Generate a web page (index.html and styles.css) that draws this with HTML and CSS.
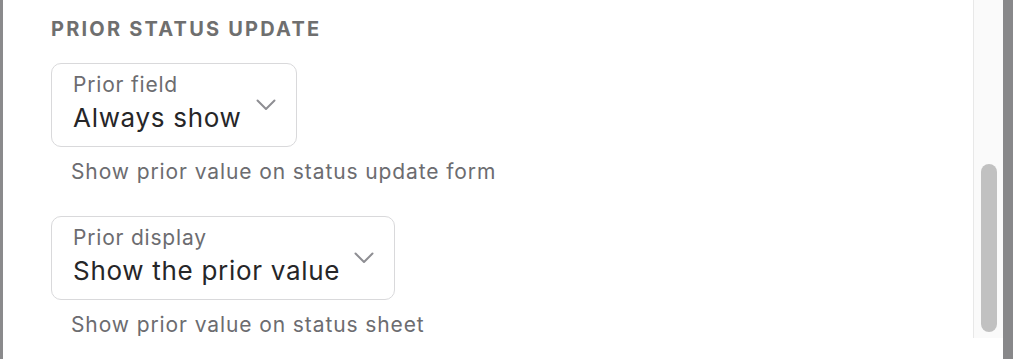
FILE: index.html
```html
<!DOCTYPE html>
<html>
<head>
<meta charset="utf-8">
<link rel="stylesheet" href="styles.css">
</head>
<body>
<div class="frame">
  <div class="edge-left"></div>
  <main class="panel">
    <h2 class="section-title">PRIOR STATUS UPDATE</h2>
    <div class="field">
      <div class="select">
        <div class="select-text">
          <span class="select-label">Prior field</span>
          <span class="select-value">Always show</span>
        </div>
        <svg class="chevron" viewBox="0 0 20 12" width="20" height="12"><path d="M1.5 1.5 L10 10 L18.5 1.5" fill="none" stroke="#8e8e93" stroke-width="2" stroke-linecap="round" stroke-linejoin="round"/></svg>
      </div>
      <p class="help">Show prior value on status update form</p>
    </div>
    <div class="field">
      <div class="select">
        <div class="select-text">
          <span class="select-label">Prior display</span>
          <span class="select-value">Show the prior value</span>
        </div>
        <svg class="chevron" viewBox="0 0 20 12" width="20" height="12"><path d="M1.5 1.5 L10 10 L18.5 1.5" fill="none" stroke="#8e8e93" stroke-width="2" stroke-linecap="round" stroke-linejoin="round"/></svg>
      </div>
      <p class="help">Show prior value on status sheet</p>
    </div>
  </main>
  <div class="scroll-track">
    <div class="scroll-thumb"></div>
  </div>
  <div class="edge-right"></div>
</div>
</body>
</html>
```

FILE: styles.css
```css
html, body {
  margin: 0;
  padding: 0;
  background: #ffffff;
}
body {
  font-family: "Inter", "Liberation Sans", sans-serif;
  width: 1013px;
  height: 359px;
  overflow: hidden;
}
.frame {
  display: flex;
  height: 359px;
}
.edge-left {
  width: 3px;
  background: #8a8a8c;
  flex: none;
}
.panel {
  flex: 1;
  padding: 17px 0 0 48px;
  box-sizing: border-box;
}
.section-title {
  margin: 0;
  font-size: 20px;
  line-height: 24px;
  font-weight: 700;
  color: #6f6f6f;
  letter-spacing: 2.2px;
}
.field {
  margin-top: 22px;
}
.field + .field {
  margin-top: 32px;
}
.select {
  display: inline-flex;
  align-items: center;
  box-sizing: border-box;
  height: 84px;
  border: 1.5px solid #d9d9db;
  border-radius: 10px;
  padding: 0 20px 0 21px;
}
.select-text {
  display: flex;
  flex-direction: column;
  margin-top: -4px;
}
.select-label {
  font-size: 21px;
  line-height: 28px;
  color: #6c6c70;
  letter-spacing: 0.8px;
}
.select-value {
  margin-top: 2px;
  font-size: 26px;
  line-height: 34px;
  color: #262628;
  letter-spacing: 0.7px;
}
.chevron {
  margin-left: 14px;
  margin-top: 0;
  flex: none;
}
.help {
  margin: 13px 0 0 20px;
  font-size: 21px;
  line-height: 24px;
  color: #6c6c70;
  letter-spacing: 0.9px;
}
.scroll-track {
  width: 29px;
  height: 338px;
  flex: none;
  background: #fafafa;
  border-left: 1px solid #e8e8e8;
  box-sizing: content-box;
}
.scroll-thumb {
  width: 16px;
  height: 168px;
  margin: 164px 0 0 7px;
  border-radius: 8px;
  background: #c1c1c1;
}
.edge-right {
  width: 10px;
  background: #88888a;
  flex: none;
}
```
